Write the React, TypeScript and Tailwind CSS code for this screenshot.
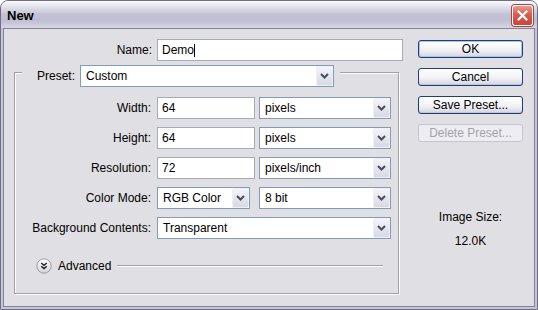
import React from "react";

function Chevron() {
  return (
    <svg width="9" height="6" viewBox="0 0 9 6">
      <path d="M1 1 L4.5 4.5 L8 1" fill="none" stroke="#4a4a62" strokeWidth="2" />
    </svg>
  );
}

function Select({ value, w }: { value: string; w: string }) {
  return (
    <div className={`${w} h-[22px] border border-[#7f9db9] bg-white flex items-center`}>
      <span className="flex-1 pl-[5px] leading-none">{value}</span>
      <div className="w-[17px] h-[20px] border border-[#eef0f8] rounded-[2px] bg-[linear-gradient(#f4f4f8,#d9d9e4)] flex items-center justify-center">
        <Chevron />
      </div>
    </div>
  );
}

function Input({ value, w, caret }: { value: string; w: string; caret?: boolean }) {
  return (
    <div className={`${w} h-[22px] border border-[#a5acb5] bg-white flex items-center pl-[4px]`}>
      <span className="leading-none">{value}</span>
      {caret && <span className="w-px h-[13px] bg-black" />}
    </div>
  );
}

function Row({ label, children }: { label: string; children: React.ReactNode }) {
  return (
    <div className="flex items-center h-[22px]">
      <div className="w-[137px] text-right pr-[1px] leading-none">{label}</div>
      <div className="flex items-center gap-[4px] ml-[5px]">{children}</div>
    </div>
  );
}

function Btn({ label, def, disabled }: { label: string; def?: boolean; disabled?: boolean }) {
  if (disabled) {
    return (
      <div className="w-[105px] h-[18px] rounded-[3px] border border-[#c6c5cf] bg-[#eeedf1] text-[#a4a3ab] flex items-center justify-center leading-none">
        {label}
      </div>
    );
  }
  return (
    <div
      className={`w-[105px] h-[18px] rounded-[3px] border border-[#1f3d78] bg-[linear-gradient(#ffffff,#f2f2f6_55%,#d4d4e0)] flex items-center justify-center leading-none text-black ${
        def ? "shadow-[inset_0_0_0_1px_#a9c3ee]" : "shadow-[inset_0_-1px_0_#c3c3d3]"
      }`}
    >
      {label}
    </div>
  );
}

export default function App() {
  return (
    <div className="w-[538px] h-[310px] rounded-t-[8px] border border-[#6f6e86] bg-[#c6c5d7] flex flex-col overflow-hidden font-['Liberation_Sans',Arial,sans-serif] text-[12px] text-black">
      {/* Title bar */}
      <div className="h-[27px] shrink-0 flex items-center justify-between pl-[6px] pr-[4px] bg-[linear-gradient(#fbfbfd_0%,#e6e6ee_18%,#c3c2d5_50%,#bebdd2_70%,#d6d6e2_100%)]">
        <span className="font-bold text-[13px] leading-none mt-[2px]">New</span>
        <div className="w-[21px] h-[21px] mt-[2px] rounded-[3px] border border-white shadow-[0_0_0_1px_#a3463e] bg-[linear-gradient(#ec9a8f,#d95c4f_45%,#c8453a)] flex items-center justify-center">
          <svg width="11" height="11" viewBox="0 0 11 11">
            <path d="M1.5 1.5 L9.5 9.5 M9.5 1.5 L1.5 9.5" stroke="#ffffff" strokeWidth="2.2" strokeLinecap="square" />
          </svg>
        </div>
      </div>
      {/* Frame */}
      <div className="flex-1 px-[2px] pb-[2px]">
        <div className="h-full border border-[#83829a] bg-[#e0dfe3] flex pt-[10px]">
          {/* Left column */}
          <div className="w-[405px] flex flex-col">
            <div className="flex items-center h-[22px]">
              <div className="w-[148px] text-right leading-none">Name:</div>
              <div className="ml-[5px]">
                <Input value="Demo" w="w-[246px]" caret />
              </div>
            </div>
            {/* Group box */}
            <div className="ml-[10px] mt-[11px] w-[385px] h-[222px] border border-[#a0a0a6] shadow-[inset_1px_1px_0_#ffffff,1px_1px_0_#ffffff] flex flex-col">
              <div className="-mt-[8px] ml-[7px] self-start flex items-center bg-[#e0dfe3] pl-[15px] pr-[6px]">
                <span className="leading-none mr-[5px]">Preset:</span>
                <Select value="Custom" w="w-[254px]" />
              </div>
              <div className="mt-[10px] flex flex-col gap-[8px]">
                <Row label="Width:">
                  <Input value="64" w="w-[98px]" />
                  <Select value="pixels" w="w-[132px]" />
                </Row>
                <Row label="Height:">
                  <Input value="64" w="w-[98px]" />
                  <Select value="pixels" w="w-[132px]" />
                </Row>
                <Row label="Resolution:">
                  <Input value="72" w="w-[98px]" />
                  <Select value="pixels/inch" w="w-[132px]" />
                </Row>
                <Row label="Color Mode:">
                  <Select value="RGB Color" w="w-[93px]" />
                  <div className="ml-[5px]">
                    <Select value="8 bit" w="w-[132px]" />
                  </div>
                </Row>
                <Row label="Background Contents:">
                  <Select value="Transparent" w="w-[234px]" />
                </Row>
              </div>
              <div className="mt-[19px] h-[16px] flex items-center ml-[21px] mr-[15px]">
                <svg width="16" height="16" viewBox="0 0 16 16">
                  <defs>
                    <linearGradient id="adv" x1="0" y1="0" x2="0" y2="1">
                      <stop offset="0" stopColor="#ffffff" />
                      <stop offset="1" stopColor="#d2d2d8" />
                    </linearGradient>
                  </defs>
                  <circle cx="8" cy="8" r="7.2" fill="url(#adv)" stroke="#9c9ca4" strokeWidth="1" />
                  <path d="M5.3 5 L8 7.4 L10.7 5 M5.3 8.2 L8 10.6 L10.7 8.2" fill="none" stroke="#1e1e28" strokeWidth="1.4" />
                </svg>
                <span className="ml-[6px] leading-none">Advanced</span>
                <div className="flex-1 ml-[6px] h-[2px] border-t border-[#a0a0a6] border-b border-b-white" />
              </div>
            </div>
          </div>
          {/* Right column */}
          <div className="ml-[9px] mt-[1px] flex flex-col items-center w-[105px]">
            <div className="flex flex-col gap-[10px]">
              <Btn label="OK" def />
              <Btn label="Cancel" />
              <Btn label="Save Preset..." />
              <Btn label="Delete Preset..." disabled />
            </div>
            <div className="mt-[68px] leading-[14px]">Image Size:</div>
            <div className="mt-[10px] leading-[14px]">12.0K</div>
          </div>
        </div>
      </div>
    </div>
  );
}
